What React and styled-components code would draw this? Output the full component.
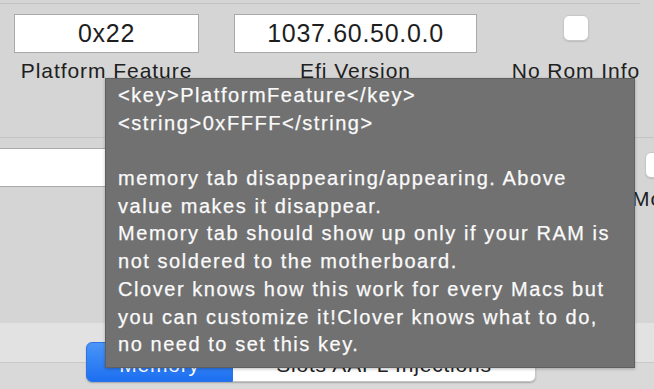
import React from "react";
import styled, { createGlobalStyle } from "styled-components";

const GlobalStyle = createGlobalStyle`
  html, body {
    margin: 0;
    padding: 0;
    background: #d5d5d5;
    overflow: hidden;
  }
  * { box-sizing: border-box; }
`;

const Page = styled.div`
  position: relative;
  width: 654px;
  height: 389px;
  overflow: hidden;
  display: flex;
  flex-direction: column;
  background: #d5d5d5;
  font-family: "Liberation Sans", Arial, sans-serif;
  color: #1f1f1f;
`;

const Rule = styled.div`
  height: 1px;
  flex: none;
  background: #c3c3c3;
  margin: ${(p) => p.$margin};
`;

const FieldRow = styled.div`
  display: flex;
  align-items: flex-start;
  gap: ${(p) => p.$gap}px;
  padding-left: ${(p) => p.$left}px;
  margin-top: 10px;
`;

const Column = styled.div`
  display: flex;
  flex-direction: column;
  align-items: ${(p) => p.$align || "center"};
  width: ${(p) => p.$width}px;
  margin-left: ${(p) => p.$shift || 0}px;
  flex: none;
`;

const TextField = styled.div`
  flex: none;
  width: ${(p) => p.$width}px;
  height: 39px;
  background: #ffffff;
  border: 1px solid #a9a9a9;
  display: flex;
  align-items: center;
  justify-content: center;
  font-size: 25px;
  letter-spacing: 0.7px;
  color: #1e1e1e;
  margin-left: ${(p) => p.$shift || 0}px;
`;

const CheckSlot = styled.div`
  height: 39px;
  padding-top: ${(p) => p.$top}px;
  padding-left: ${(p) => p.$left || 0}px;
  display: flex;
  align-items: flex-start;
`;

const CheckBox = styled.div`
  width: 26px;
  height: 26px;
  border-radius: 6px;
  background: #ffffff;
  border: 1px solid #c7c7c7;
  box-shadow: 0 1px 1px rgba(0, 0, 0, 0.12);
`;

const Label = styled.div`
  margin-top: ${(p) => p.$top}px;
  font-size: 21px;
  line-height: 24px;
  letter-spacing: 0.95px;
  white-space: nowrap;
  color: #202020;
`;

const Bottom = styled.div`
  margin-top: auto;
  height: 66px;
  flex: none;
  padding: 19px 0 0 86px;
  background: linear-gradient(
    to bottom,
    #e2e2e2 0,
    #e2e2e2 39px,
    #c9c9c9 39px,
    #c9c9c9 40px,
    #d9d9d9 40px
  );
`;

const Segmented = styled.div`
  display: flex;
  height: 40px;
  border-radius: 6px;
  box-shadow: 0 1px 1.5px rgba(0, 0, 0, 0.25);
  width: max-content;
`;

const Segment = styled.div`
  width: ${(p) => p.$width}px;
  height: 40px;
  padding-top: 4px;
  line-height: 36px;
  text-align: center;
  font-size: 21px;
  letter-spacing: 0.8px;
  white-space: nowrap;
  color: ${(p) => (p.$active ? "#ffffff" : "#222222")};
  background: ${(p) =>
    p.$active
      ? "linear-gradient(to bottom, #4a95f8, #1c6ff0)"
      : "#ffffff"};
  border: 1px solid ${(p) => (p.$active ? "#2c74e6" : "#c6c6c6")};
  border-left-width: ${(p) => (p.$active ? 1 : 0)}px;
  border-radius: ${(p) => (p.$active ? "6px 0 0 6px" : "0 6px 6px 0")};
`;

const Tooltip = styled.div`
  position: absolute;
  left: 105px;
  top: 78px;
  width: 530px;
  height: 290px;
  padding: 3px 10px 0 12px;
  background: #717171;
  border: 1px solid #5f5f5f;
  color: #fafafa;
  font-size: 20px;
  line-height: 27.7px;
  letter-spacing: 1.55px;
  -webkit-text-stroke: 0.25px #fafafa;
  box-shadow: 0 1px 3px rgba(0, 0, 0, 0.25);
`;

const TipLine = styled.div`
  white-space: nowrap;
  height: 27.7px;
`;

const tipLines = [
  "<key>PlatformFeature</key>",
  "<string>0xFFFF</string>",
  "",
  "memory tab disappearing/appearing. Above",
  "value makes it disappear.",
  "Memory tab should show up only if your RAM is",
  "not soldered to the motherboard.",
  "Clover knows how this work for every Macs but",
  "you can customize it!Clover knows what to do,",
  "no need to set this key.",
];

export default function App() {
  return (
    <>
      <GlobalStyle />
      <Page>
        <Rule $margin="3px 14px 0 0" />
        <FieldRow $gap={35} $left={14}>
          <Column $width={185}>
            <TextField $width={185}>0x22</TextField>
            <Label $top={6}>Platform Feature</Label>
          </Column>
          <Column $width={243}>
            <TextField $width={243}>1037.60.50.0.0</TextField>
            <Label $top={6}>Efi Version</Label>
          </Column>
          <Column $width={130} $shift={-1}>
            <CheckSlot $top={1}>
              <CheckBox />
            </CheckSlot>
            <Label $top={6}>No Rom Info</Label>
          </Column>
        </FieldRow>
        <Rule $margin="54px 0 0 0" />
        <FieldRow $gap={34} $left={0}>
          <TextField $width={600} $shift={-2} />
          <Column $width={22} $align="flex-start">
            <CheckSlot $top={4} $left={13}>
              <CheckBox />
            </CheckSlot>
            <Label $top={0}>Mo</Label>
          </Column>
        </FieldRow>
        <Bottom>
          <Segmented>
            <Segment $active $width={147}>
              Memory
            </Segment>
            <Segment $width={303}>Slots AAPL Injections</Segment>
          </Segmented>
        </Bottom>
        <Tooltip>
          {tipLines.map((line, i) => (
            <TipLine key={i}>{line || "\u00a0"}</TipLine>
          ))}
        </Tooltip>
      </Page>
    </>
  );
}
